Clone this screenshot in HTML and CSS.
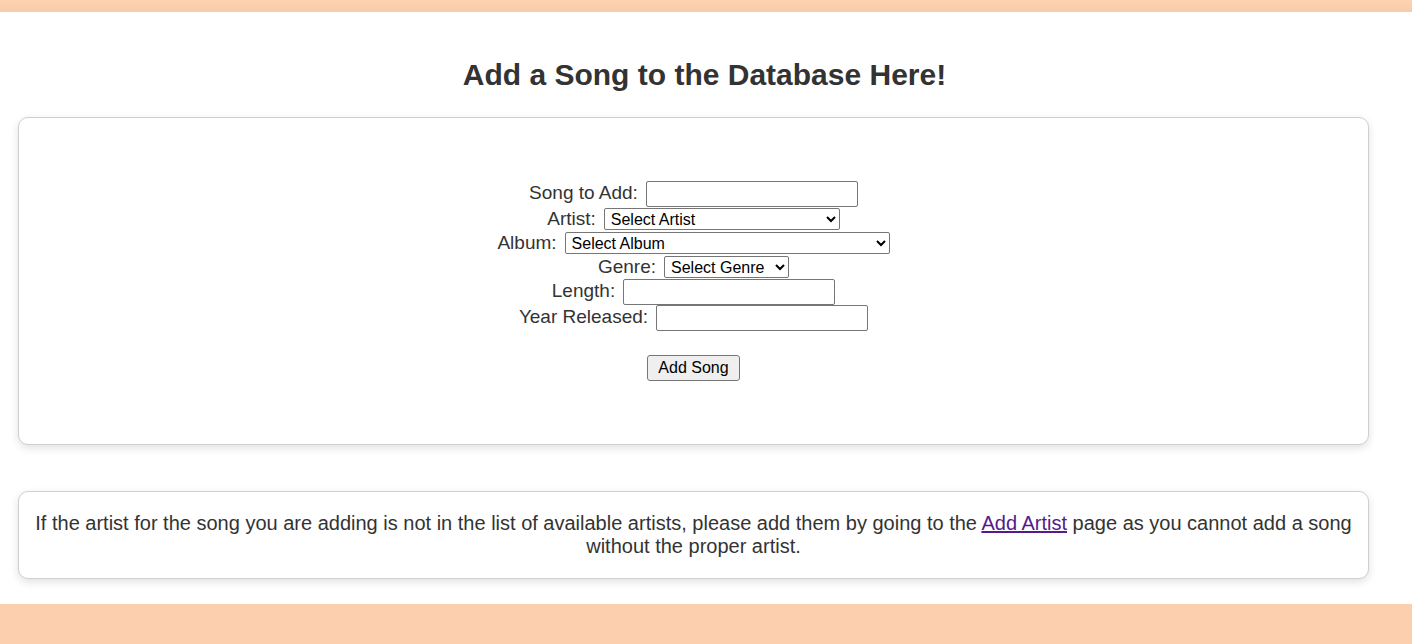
FILE: index.html
```html
<!DOCTYPE html>
<html lang="en">
<head>
<meta charset="utf-8">
<title>Add a Song</title>
<link rel="stylesheet" href="styles.css">
</head>
<body>
<header class="topbar"></header>
<main class="page">
  <h1 class="title">Add a Song to the Database Here!</h1>
  <section class="card form-card">
    <form class="song-form">
      <div class="row row-tall"><label for="song">Song to Add:</label><input id="song" class="text-input" type="text"></div>
      <div class="row"><label for="artist">Artist:</label><select id="artist" class="sel sel-artist"><option>Select Artist</option></select></div>
      <div class="row"><label for="album">Album:</label><select id="album" class="sel sel-album"><option>Select Album</option></select></div>
      <div class="row"><label for="genre">Genre:</label><select id="genre" class="sel sel-genre"><option>Select Genre</option></select></div>
      <div class="row row-tall"><label for="length">Length:</label><input id="length" class="text-input" type="text"></div>
      <div class="row row-tall"><label for="year">Year Released:</label><input id="year" class="text-input" type="text"></div>
      <div class="actions"><button type="button" class="btn">Add Song</button></div>
    </form>
  </section>
  <section class="card note-card">
    <p class="note">If the artist for the song you are adding is not in the list of available artists, please add them by going to the <a class="visited" href="#">Add Artist</a> page as you cannot add a song without the proper artist.</p>
  </section>
</main>
<footer class="footer"></footer>
</body>
</html>
```

FILE: styles.css
```css
html, body {
  margin: 0;
  padding: 0;
  background: #ffffff;
}
body {
  font-family: "Liberation Sans", Arial, sans-serif;
  color: #333333;
  font-size: 19px;
}
.topbar {
  height: 12px;
  background: linear-gradient(#fdd3b2, #f9cba7);
}
.page {
  padding: 0 43px 0 18px;
}
.title {
  margin: 46px 0 25px 0;
  font-size: 30px;
  line-height: 34px;
  font-weight: bold;
  text-align: center;
  position: relative;
  left: 11px;
}
.card {
  background: #fff;
  border: 1px solid #cfcfcf;
  border-radius: 10px;
  box-shadow: 0 3px 8px rgba(0, 0, 0, 0.12);
}
.form-card {
  padding: 63px 20px 63px 20px;
}
.song-form {
  display: flex;
  flex-direction: column;
  align-items: center;
}
.row {
  display: flex;
  align-items: baseline;
  justify-content: center;
  height: 24px;
  gap: 8px;
}
.row-tall {
  height: 26px;
}
.row label {
  line-height: 22px;
}
.text-input {
  box-sizing: border-box;
  width: 212px;
  height: 26px;
  border: 1px solid #767676;
  border-radius: 2px;
  font-family: "Liberation Sans", Arial, sans-serif;
  font-size: 16px;
  padding: 1px 3px;
  margin: 0;
  background: #fff;
}
.sel {
  box-sizing: border-box;
  height: 22px;
  margin: 1px 0 0 0;
  border: 1px solid #767676;
  border-radius: 2px;
  font-family: "Liberation Sans", Arial, sans-serif;
  font-size: 16px;
  color: #000;
  background: #fff;
  padding: 0 2px;
}
.sel-artist { width: 236px; }
.sel-album { width: 325px; }
.sel-genre { width: 125px; }
.actions {
  margin-top: 24px;
}
.btn {
  box-sizing: border-box;
  width: 93px;
  height: 26px;
  font-family: "Liberation Sans", Arial, sans-serif;
  font-size: 16px;
  color: #000;
  background: #efefef;
  border: 1px solid #767676;
  border-radius: 3px;
  padding: 0;
}
.note-card {
  margin-top: 46px;
  padding: 20px 14px 20px 14px;
}
.note {
  margin: 0;
  text-align: center;
  font-size: 20px;
  line-height: 23px;
}
.note a.visited {
  color: #551a8b;
}
.footer {
  margin-top: 25px;
  height: 40px;
  background: #fccfae;
}
```
